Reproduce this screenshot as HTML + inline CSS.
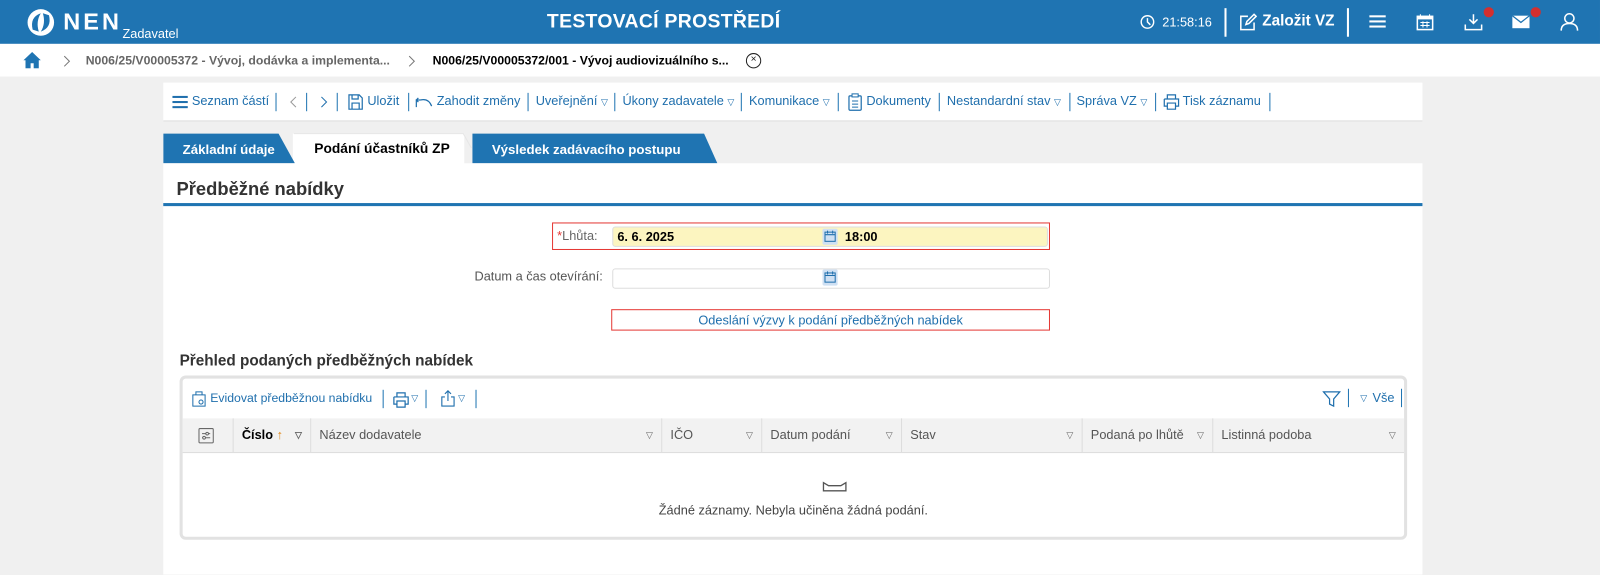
<!DOCTYPE html>
<html><head><meta charset="utf-8"><style>
*{box-sizing:border-box;margin:0;padding:0}
body{width:1600px;height:563px;overflow:hidden;background:#f0f0f0;font-family:"Liberation Sans",sans-serif;font-size:12.5px;color:#333;position:relative}
#w{position:absolute;left:0;top:0;width:1568px;height:552px;transform:scale(1.0204);transform-origin:0 0}
.a{position:absolute;white-space:nowrap}
.hdr{position:absolute;left:0;top:0;width:1568px;height:43px;background:#1f74b2;color:#fff}
.bc{position:absolute;left:0;top:43px;width:1568px;height:32px;background:#fff}
.tb{position:absolute;left:160px;top:81px;width:1234px;height:38px;background:#fff;border-bottom:1px solid #ddd}
.tb .a{top:11px;color:#1f6fad}
.sep{position:absolute;top:10px;width:1px;height:18px;background:#1f74b2}
.main{position:absolute;left:160px;top:160px;width:1234px;height:403px;background:#fff}
.box{position:absolute;left:176px;top:368px;width:1203px;height:161px;border:3px solid #e2e2e2;border-radius:6px;background:#fff}
.th{position:absolute;top:39px;height:34px;background:#f2f2f2;border-bottom:1px solid #ddd;left:0;right:0}
.th .c{position:absolute;top:0;height:33px;border-left:1px solid #ddd;padding:9px 8px;color:#555;font-size:12.5px}
.tri{font-size:9px;color:#666;position:absolute;right:8px;top:11px}
</style></head><body><div id="w">
<div class="hdr">
 <svg class="a" style="left:25px;top:7px" width="30" height="30" viewBox="0 0 30 30"><circle cx="15" cy="15" r="13" fill="#fff"/><path d="M7 22 Q4 10 15 6 Q10 14 13 24Z M23 8 Q26 20 15 24 Q20 16 17 6Z" fill="#1f74b2"/></svg>
 <div class="a" style="left:62px;top:8px;font-size:23px;font-weight:bold;letter-spacing:3px">NEN</div>
 <div class="a" style="left:120px;top:26px;font-size:12.5px">Zadavatel</div>
 <div class="a" style="left:536px;top:11px;font-size:19px;font-weight:bold;letter-spacing:.3px">TESTOVACÍ PROSTŘEDÍ</div>
 <svg class="a" style="left:1117px;top:14px" width="15" height="15" viewBox="0 0 16 16"><circle cx="8" cy="8" r="6.5" fill="none" stroke="#fff" stroke-width="1.5"/><path d="M8 4v4l3 3" fill="none" stroke="#fff" stroke-width="1.5"/></svg>
 <div class="a" style="left:1139px;top:15px;font-size:12.5px">21:58:16</div>
 <div class="a" style="left:1200px;top:8px;width:2px;height:28px;background:#fff"></div>
 <svg class="a" style="left:1214px;top:13px" width="18" height="18" viewBox="0 0 18 18"><path d="M9 3H2v13h13V9" fill="none" stroke="#fff" stroke-width="1.5"/><path d="M7 11l1-3 7-7 2 2-7 7z" fill="none" stroke="#fff" stroke-width="1.5"/></svg>
 <div class="a" style="left:1237px;top:12px;font-size:15px;font-weight:bold">Založit VZ</div>
 <div class="a" style="left:1320px;top:8px;width:2px;height:28px;background:#fff"></div>
 <div class="a" style="left:1342px;top:15px;width:16px;height:2px;background:#fff;box-shadow:0 5px 0 #fff,0 10px 0 #fff"></div>
 <svg class="a" style="left:1388px;top:13px" width="17" height="17" viewBox="0 0 17 17"><rect x="1" y="3" width="15" height="13" fill="none" stroke="#fff" stroke-width="1.5"/><rect x="1" y="3" width="15" height="3" fill="#fff"/><path d="M4 1v3M13 1v3M4 9h9M4 12h9M6.5 8v6M10.5 8v6" stroke="#fff"/></svg>
 <svg class="a" style="left:1435px;top:13px" width="18" height="17" viewBox="0 0 18 17"><path d="M9 1v9M5 6l4 4 4-4M1 11v5h16v-5" fill="none" stroke="#fff" stroke-width="1.5"/></svg>
 <div class="a" style="left:1454px;top:7px;width:10px;height:10px;border-radius:50%;background:#d32f2f"></div>
 <svg class="a" style="left:1482px;top:15px" width="17" height="13" viewBox="0 0 18 13"><rect width="18" height="13" fill="#fff"/><path d="M0 0l9 7 9-7" fill="none" stroke="#1f74b2" stroke-width="1.3"/></svg>
 <div class="a" style="left:1500px;top:7px;width:10px;height:10px;border-radius:50%;background:#d32f2f"></div>
 <svg class="a" style="left:1529px;top:12px" width="18" height="19" viewBox="0 0 18 19"><circle cx="9" cy="6" r="4.5" fill="none" stroke="#fff" stroke-width="1.5"/><path d="M1 18q0-7 8-7t8 7" fill="none" stroke="#fff" stroke-width="1.5"/></svg>
</div>
<div class="bc">
 <svg class="a" style="left:23px;top:8px" width="17" height="16" viewBox="0 0 17 16"><path d="M8.5 0L0 8h2v8h5v-5h3v5h5V8h2z" fill="#1f74b2"/></svg>
 <svg class="a" style="left:62px;top:11px" width="7" height="12" viewBox="0 0 7 12"><path d="M1 1l5 5-5 5" fill="none" stroke="#777"/></svg>
 <div class="a" style="left:84px;top:9px;font-size:12px;font-weight:bold;color:#666">N006/25/V00005372 - Vývoj, dodávka a implementa...</div>
 <svg class="a" style="left:400px;top:11px" width="7" height="12" viewBox="0 0 7 12"><path d="M1 1l5 5-5 5" fill="none" stroke="#777"/></svg>
 <div class="a" style="left:424px;top:9px;font-size:12px;font-weight:bold;color:#000">N006/25/V00005372/001 - Vývoj audiovizuálního s...</div>
 <div class="a" style="left:731px;top:9px;width:15px;height:15px;border:1.3px solid #222;border-radius:50%;font-size:10px;line-height:12px;text-align:center;color:#222">×</div>
</div>
<div class="tb">
 <div class="a" style="left:9px;top:13px;width:15px;height:1.5px;background:#1f6fad;box-shadow:0 5px 0 #1f6fad,0 10px 0 #1f6fad"></div>
 <div class="a" style="left:28px">Seznam částí</div><div class="sep" style="left:110px"></div>
 <svg class="a" style="left:124px;top:13px" width="7" height="12" viewBox="0 0 7 12"><path d="M6 1L1 6l5 5" fill="none" stroke="#999"/></svg><div class="sep" style="left:140px"></div>
 <svg class="a" style="left:154px;top:13px" width="7" height="12" viewBox="0 0 7 12"><path d="M1 1l5 5-5 5" fill="none" stroke="#1f6fad"/></svg><div class="sep" style="left:170px"></div>
 <svg class="a" style="left:181px;top:11px" width="15" height="16" viewBox="0 0 15 16"><path d="M1 1h10l3 3v11H1z M4 1v4h6V1 M4 15v-6h7v6" fill="none" stroke="#1f6fad" stroke-width="1.2"/></svg>
 <div class="a" style="left:200px">Uložit</div><div class="sep" style="left:240px"></div>
 <svg class="a" style="left:247px;top:13px" width="17" height="12" viewBox="0 0 17 12"><path d="M1 11V4h4M3 2L1 4l2 2M5 4q8-2 11 6" fill="none" stroke="#1f6fad" stroke-width="1.2"/></svg>
 <div class="a" style="left:268px">Zahodit změny</div><div class="sep" style="left:357px"></div>
 <div class="a" style="left:365px">Uveřejnění <span style="font-size:9px">▽</span></div><div class="sep" style="left:442px"></div>
 <div class="a" style="left:450px">Úkony zadavatele <span style="font-size:9px">▽</span></div><div class="sep" style="left:566px"></div>
 <div class="a" style="left:574px">Komunikace <span style="font-size:9px">▽</span></div><div class="sep" style="left:661px"></div>
 <svg class="a" style="left:671px;top:10px" width="14" height="18" viewBox="0 0 14 18"><rect x="1" y="3" width="12" height="14" rx="1" fill="none" stroke="#1f6fad" stroke-width="1.2"/><rect x="4" y="1" width="6" height="3" fill="#fff" stroke="#1f6fad"/><path d="M4 8h6M4 11h6M4 14h6" stroke="#1f6fad"/></svg>
 <div class="a" style="left:689px">Dokumenty</div><div class="sep" style="left:760px"></div>
 <div class="a" style="left:768px">Nestandardní stav <span style="font-size:9px">▽</span></div><div class="sep" style="left:888px"></div>
 <div class="a" style="left:895px">Správa VZ <span style="font-size:9px">▽</span></div><div class="sep" style="left:972px"></div>
 <svg class="a" style="left:980px;top:11px" width="16" height="16" viewBox="0 0 16 16"><path d="M4 5V1h8v4M1 5h14v7h-3M4 12H1V5M4 9h8v6H4z" fill="none" stroke="#1f6fad" stroke-width="1.2"/></svg>
 <div class="a" style="left:999px">Tisk záznamu</div><div class="sep" style="left:1084px"></div>
</div>
<div class="a" style="left:287px;top:131px;width:168px;height:30px;background:#fff"></div>
<svg class="a" style="left:160px;top:129px" width="560" height="32" viewBox="0 0 560 32"><path d="M0 2h113l16 29H0z" fill="#1f74b2"/><path d="M303 2h227l13 29H303z" fill="#1f74b2"/><path d="M128 2h166l8 14" fill="none" stroke="#e6e6e6"/></svg>
<div class="a" style="left:179px;top:139px;font-weight:bold;font-size:13px;color:#fff">Základní údaje</div>
<div class="a" style="left:308px;top:138px;font-weight:bold;font-size:13.5px;color:#000">Podání účastníků ZP</div>
<div class="a" style="left:482px;top:139px;font-weight:bold;font-size:13px;color:#fff">Výsledek zadávacího postupu</div>
<div class="main">
 <div class="a" style="left:13px;top:15px;font-size:18px;font-weight:bold;color:#333">Předběžné nabídky</div>
 <div class="a" style="left:0;top:39px;width:1234px;height:3px;background:#1f74b2"></div>
</div>
<div class="a" style="left:541px;top:218px;width:488px;height:27px;border:1px solid #e53935"></div>
<div class="a" style="left:546px;top:224px;color:#666"><span style="color:#e53935">*</span>Lhůta:</div>
<div class="a" style="left:600px;top:222px;width:427px;height:20px;background:#fcf5c0;border:1px solid #ddd;border-radius:3px"></div>
<div class="a" style="left:605px;top:225px;color:#000;font-weight:bold;font-size:12.5px">6. 6. 2025</div>
<div class="a" style="left:828px;top:225px;color:#000;font-weight:bold;font-size:12.5px">18:00</div>
<div class="a" style="left:465px;top:264px;color:#555">Datum a čas otevírání:</div>
<div class="a" style="left:600px;top:263px;width:429px;height:20px;background:#fff;border:1px solid #ddd;border-radius:3px"></div>
<svg class="a" style="left:806px;top:224px" width="15" height="16" viewBox="0 0 15 16"><rect width="15" height="16" rx="2" fill="#cfe0f3"/><rect x="2.5" y="3.5" width="10" height="9" fill="none" stroke="#1f6fad"/><path d="M2.5 6h10M5 2v3M10 2v3" stroke="#1f6fad"/></svg>
<svg class="a" style="left:806px;top:264px" width="15" height="16" viewBox="0 0 15 16"><rect width="15" height="16" rx="2" fill="#cfe0f3"/><rect x="2.5" y="3.5" width="10" height="9" fill="none" stroke="#1f6fad"/><path d="M2.5 6h10M5 2v3M10 2v3" stroke="#1f6fad"/></svg>
<div class="a" style="left:599px;top:303px;width:430px;height:21px;border:1px solid #e53935;text-align:center;color:#1f6fad;padding-top:3px">Odeslání výzvy k podání předběžných nabídek</div>
<div class="a" style="left:176px;top:345px;font-size:15px;font-weight:bold;color:#333">Přehled podaných předběžných nabídek</div>
<div class="box">
 <svg class="a" style="left:8px;top:12px" width="16" height="16" viewBox="0 0 16 16"><path d="M2 4h12v11H2z M5 1h6v3H5z" fill="none" stroke="#1f6fad"/><circle cx="10" cy="11" r="2" fill="none" stroke="#1f6fad"/></svg>
 <div class="a" style="left:27px;top:12px;color:#1f6fad;font-size:12px">Evidovat předběžnou nabídku</div>
 <div class="a" style="left:196px;top:11px;width:1px;height:18px;background:#1f74b2"></div>
 <svg class="a" style="left:206px;top:13px" width="16" height="16" viewBox="0 0 16 16"><path d="M4 5V1h8v4M1 5h14v7h-3M4 12H1V5M4 9h8v6H4z" fill="none" stroke="#1f6fad" stroke-width="1.2"/></svg>
 <div class="a" style="left:224px;top:14px;font-size:9px;color:#1f6fad">▽</div>
 <div class="a" style="left:238px;top:11px;width:1px;height:18px;background:#1f74b2"></div>
 <svg class="a" style="left:253px;top:11px" width="14" height="17" viewBox="0 0 14 17"><path d="M7 11V1M4 4l3-3 3 3M4 7H1v9h12V7h-3" fill="none" stroke="#1f6fad" stroke-width="1.1"/></svg>
 <div class="a" style="left:270px;top:14px;font-size:9px;color:#1f6fad">▽</div>
 <div class="a" style="left:287px;top:11px;width:1px;height:18px;background:#1f74b2"></div>
 <svg class="a" style="left:1117px;top:11px" width="18" height="18" viewBox="0 0 18 18"><path d="M1 2h16l-6 7v7l-4-2V9z" fill="none" stroke="#1f6fad" stroke-width="1.2"/></svg>
 <div class="a" style="left:1142px;top:10px;width:1px;height:18px;background:#1f74b2"></div>
 <div class="a" style="left:1154px;top:14px;font-size:9px;color:#1f6fad">▽</div>
 <div class="a" style="left:1166px;top:12px;color:#1f6fad">Vše</div>
 <div class="a" style="left:1194px;top:10px;width:1px;height:18px;background:#1f74b2"></div>
 <div class="th">
  <div class="c" style="left:0;width:49px;border-left:none"><svg width="16" height="16" viewBox="0 0 16 16" style="margin-left:7px"><rect x="1" y="1" width="14" height="14" rx="1" fill="none" stroke="#666"/><path d="M4 6h8M4 10h8" stroke="#666"/><circle cx="9" cy="6" r="1.3" fill="#fff" stroke="#666"/><circle cx="6" cy="10" r="1.3" fill="#fff" stroke="#666"/></svg></div>
  <div class="c" style="left:49px;width:76px;color:#000;font-weight:bold">Číslo <span style="color:#e08a1e;font-weight:normal">↑</span><span class="tri">▽</span></div>
  <div class="c" style="left:125px;width:344px">Název dodavatele<span class="tri">▽</span></div>
  <div class="c" style="left:469px;width:98px">IČO<span class="tri">▽</span></div>
  <div class="c" style="left:567px;width:137px">Datum podání<span class="tri">▽</span></div>
  <div class="c" style="left:704px;width:177px">Stav<span class="tri">▽</span></div>
  <div class="c" style="left:881px;width:128px">Podaná po lhůtě<span class="tri">▽</span></div>
  <div class="c" style="left:1009px;width:188px">Listinná podoba<span class="tri">▽</span></div>
 </div>
 <svg class="a" style="left:627px;top:100px" width="24" height="12" viewBox="0 0 24 12"><path d="M1 2v8h22V2l-5 3H6z" fill="none" stroke="#555" stroke-width="1.3"/></svg>
 <div class="a" style="left:0;right:0;top:122px;text-align:center;color:#444">Žádné záznamy. Nebyla učiněna žádná podání.</div>
</div>
</div></body></html>
